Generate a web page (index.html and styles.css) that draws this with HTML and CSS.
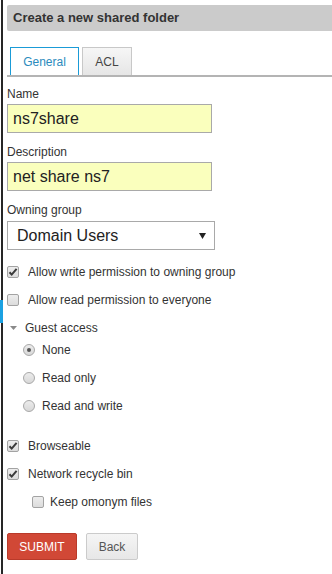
FILE: index.html
```html
<!DOCTYPE html>
<html>
<head>
    <title>Create a new shared folder</title>
    <link rel="stylesheet" href="styles.css">
</head>
<body>
    <div class="edge-mark"></div>
    <div class="page">
        <div class="panel-title">Create a new shared folder</div>

        <ul class="tabs">
            <li class="tab active">General</li>
            <li class="tab">ACL</li>
        </ul>

        <form class="form">
            <div class="field">
                <label class="field-label">Name</label>
                <input class="text-input" type="text" value="ns7share">
            </div>
            <div class="field">
                <label class="field-label">Description</label>
                <input class="text-input" type="text" value="net share ns7">
            </div>
            <div class="field group-field">
                <label class="field-label">Owning group</label>
                <div class="select">
                    <span>Domain Users</span>
                    <svg class="select-arrow" width="7" height="6" viewBox="0 0 7 6"><path d="M0 0h7L3.5 6z" fill="#222"/></svg>
                </div>
            </div>

            <div class="checks">
                <div class="check-row">
                    <span class="checkbox checked"><svg width="10" height="10" viewBox="0 0 10 10"><path d="M1.5 5.2l2.2 2.4L8.6 1.8" stroke="#3a3a3a" stroke-width="2" fill="none"/></svg></span>
                    <span>Allow write permission to owning group</span>
                </div>
                <div class="check-row">
                    <span class="checkbox"></span>
                    <span>Allow read permission to everyone</span>
                </div>
            </div>

            <div class="guest-toggle">
                <svg class="caret" width="7" height="4" viewBox="0 0 7 4"><path d="M0 0h7L3.5 4z" fill="#8a8a8a"/></svg>
                <span>Guest access</span>
            </div>
            <div class="radios">
                <div class="radio-row">
                    <span class="radio selected"></span>
                    <span>None</span>
                </div>
                <div class="radio-row">
                    <span class="radio"></span>
                    <span>Read only</span>
                </div>
                <div class="radio-row">
                    <span class="radio"></span>
                    <span>Read and write</span>
                </div>
            </div>

            <div class="checks more">
                <div class="check-row">
                    <span class="checkbox checked"><svg width="10" height="10" viewBox="0 0 10 10"><path d="M1.5 5.2l2.2 2.4L8.6 1.8" stroke="#3a3a3a" stroke-width="2" fill="none"/></svg></span>
                    <span>Browseable</span>
                </div>
                <div class="check-row">
                    <span class="checkbox checked"><svg width="10" height="10" viewBox="0 0 10 10"><path d="M1.5 5.2l2.2 2.4L8.6 1.8" stroke="#3a3a3a" stroke-width="2" fill="none"/></svg></span>
                    <span>Network recycle bin</span>
                </div>
                <div class="check-row sub">
                    <span class="checkbox"></span>
                    <span>Keep omonym files</span>
                </div>
            </div>

            <div class="buttons">
                <button type="button" class="btn btn-submit">SUBMIT</button>
                <button type="button" class="btn btn-back">Back</button>
            </div>
        </form>
    </div>
</body>
</html>
```

FILE: styles.css
```css
html, body {
    margin: 0;
    padding: 0;
    background-color: #fff;
}
body {
    font-family: "Liberation Sans", Arial, sans-serif;
    font-size: 12px;
    color: #333;
    position: relative;
    min-height: 574px;
    overflow: hidden;
}
.edge-mark {
    position: absolute;
    left: 0;
    top: 300px;
    width: 3px;
    height: 23px;
    background-color: #1ba1e2;
}
.page {
    margin-left: 1px;
    border-left: 2px solid #262626;
    padding: 5px 0 10px 4px;
    min-height: 559px;
}
.panel-title {
    height: 26px;
    line-height: 26px;
    padding-left: 6px;
    background-color: #cbcbcb;
    border-radius: 2px 0 0 2px;
    font-size: 13px;
    font-weight: bold;
    color: #333;
}
.tabs {
    list-style: none;
    margin: 16px 0 0;
    padding: 0 0 0 3px;
    display: flex;
    gap: 3px;
    border-bottom: 2px solid #b4b4b4;
}
.tab {
    height: 28px;
    line-height: 28px;
    box-sizing: border-box;
    padding: 0 12px;
    border: 1px solid #c8c8c8;
    border-bottom: none;
    background: linear-gradient(#f6f6f6, #e6e6e6);
    color: #444;
    font-size: 12px;
}
.tab:first-child {
    width: 69px;
    text-align: center;
}
.tab:last-child {
    width: 50px;
    text-align: center;
}
.tab.active {
    background: #fff;
    border-color: #1a9bd7;
    color: #2b8bbd;
}
.form {
    padding-top: 9px;
}
.field {
    margin-bottom: 11px;
}
.field-label {
    display: block;
    line-height: 16px;
    margin-bottom: 2px;
    color: #333;
}
.group-field .field-label {
    margin-bottom: 3px;
}
.text-input {
    display: block;
    width: 205px;
    height: 29px;
    box-sizing: border-box;
    margin: 0;
    padding: 0 5px;
    border: 1px solid #a9a9a9;
    background-color: #faffbd;
    font-family: "Liberation Sans", Arial, sans-serif;
    font-size: 16px;
    color: #222;
    outline: none;
}
.select {
    width: 208px;
    height: 29px;
    box-sizing: border-box;
    padding: 0 8px 0 9px;
    border: 1px solid #a9a9a9;
    background-color: #fff;
    display: flex;
    align-items: center;
    justify-content: space-between;
    font-size: 16px;
    color: #222;
}
.select-arrow {
    margin-top: 1px;
}
.checks {
    margin-top: -3px;
}
.check-row {
    height: 28px;
    display: flex;
    align-items: center;
    gap: 9px;
}
.check-row.sub {
    padding-left: 25px;
    gap: 6px;
}
.checkbox {
    width: 12px;
    height: 12px;
    box-sizing: border-box;
    border: 1px solid #a3a3a3;
    border-radius: 2px;
    background: linear-gradient(#ededed, #dcdcdc);
    display: flex;
    align-items: center;
    justify-content: center;
    flex: none;
}
.checkbox svg {
    display: block;
}
.guest-toggle {
    height: 16px;
    margin-top: 6px;
    padding-left: 3px;
    display: flex;
    align-items: center;
    gap: 8px;
}
.radios {
    padding-left: 16px;
}
.radio-row {
    height: 28px;
    display: flex;
    align-items: center;
    gap: 7px;
}
.radio {
    width: 12px;
    height: 12px;
    box-sizing: border-box;
    border: 1px solid #a8a8a8;
    border-radius: 50%;
    background: linear-gradient(#ececec, #d8d8d8);
    display: flex;
    align-items: center;
    justify-content: center;
    flex: none;
}
.radio.selected::after {
    content: "";
    width: 4px;
    height: 4px;
    border-radius: 50%;
    background-color: #555;
}
.checks.more {
    margin-top: 12px;
}
.buttons {
    margin-top: 17px;
    display: flex;
    gap: 9px;
}
.btn {
    height: 27px;
    margin: 0;
    padding: 0;
    border-radius: 2px;
    font-family: "Liberation Sans", Arial, sans-serif;
    font-size: 12px;
    cursor: pointer;
}
.btn-submit {
    width: 70px;
    background-color: #d14836;
    border: 1px solid #b93a2a;
    color: #fff;
}
.btn-back {
    width: 52px;
    background: linear-gradient(#f5f5f5, #e7e7e7);
    border: 1px solid #cbcbcb;
    color: #555;
}
```
